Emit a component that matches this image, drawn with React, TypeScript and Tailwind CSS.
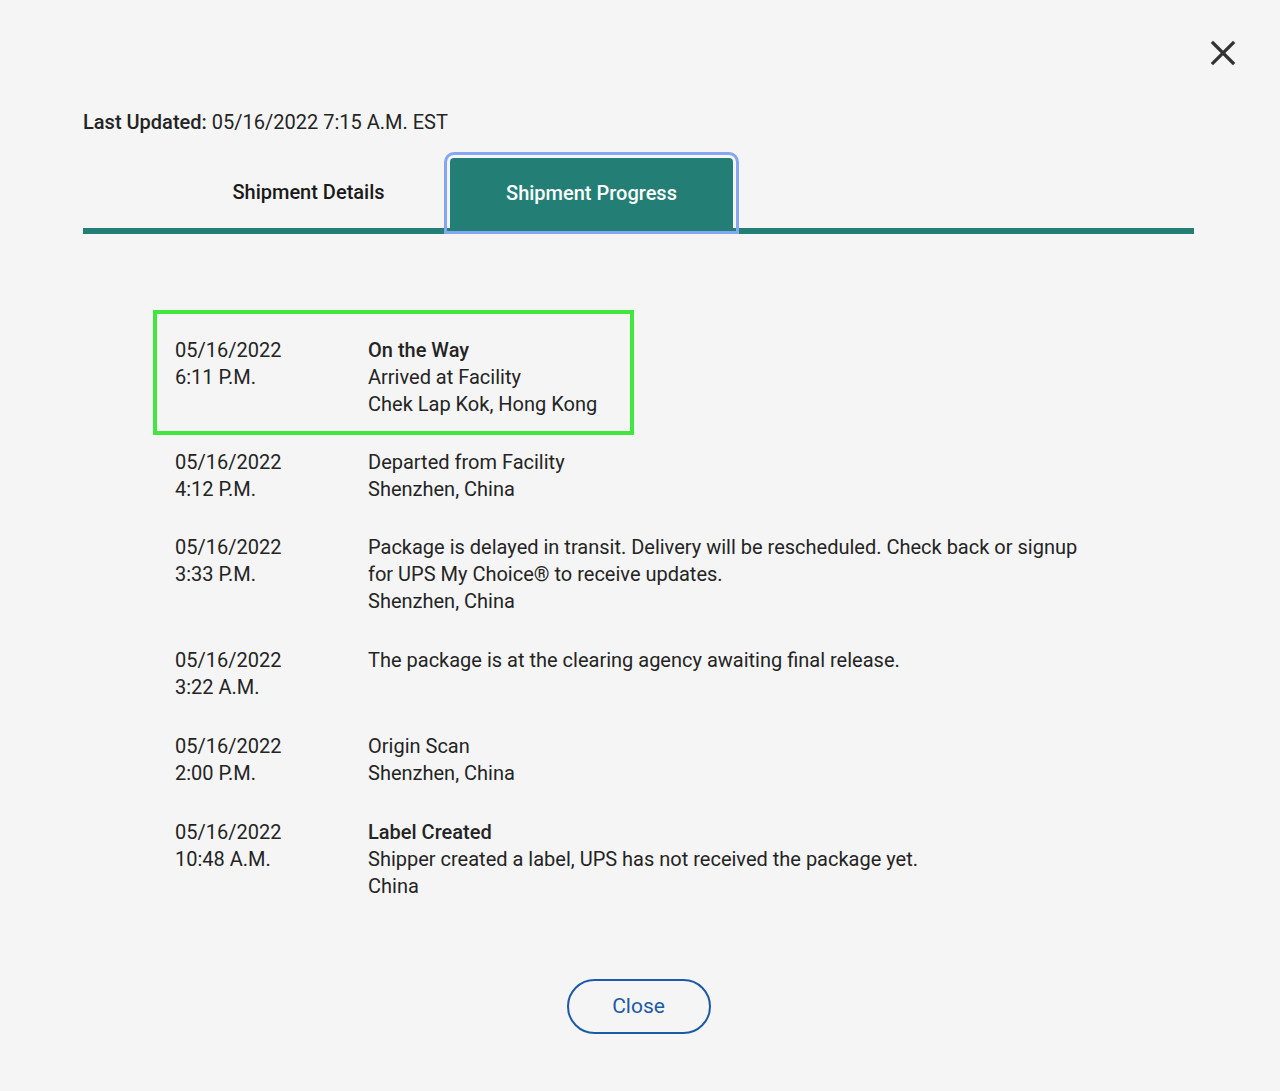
import React from "react";

type Row = { date: string; time: string; title?: string; lines: string[] };

const rows: Row[] = [
  { date: "05/16/2022", time: "4:12 P.M.", lines: ["Departed from Facility", "Shenzhen, China"] },
  {
    date: "05/16/2022",
    time: "3:33 P.M.",
    lines: [
      "Package is delayed in transit. Delivery will be rescheduled. Check back or signup for UPS My Choice® to receive updates.",
      "Shenzhen, China",
    ],
  },
  { date: "05/16/2022", time: "3:22 A.M.", lines: ["The package is at the clearing agency awaiting final release."] },
  { date: "05/16/2022", time: "2:00 P.M.", lines: ["Origin Scan", "Shenzhen, China"] },
  {
    date: "05/16/2022",
    time: "10:48 A.M.",
    title: "Label Created",
    lines: ["Shipper created a label, UPS has not received the package yet.", "China"],
  },
];

function RowContent({ r }: { r: Row }) {
  return (
    <div className="flex">
      <div className="w-[193px] shrink-0">
        <div>{r.date}</div>
        <div>{r.time}</div>
      </div>
      <div className="max-w-[720px]">
        {r.title && <div className="font-medium">{r.title}</div>}
        {r.lines.map((l, i) => (
          <div key={i}>{l}</div>
        ))}
      </div>
    </div>
  );
}

export default function App() {
  return (
    <div className="min-h-[1091px] bg-[#f5f5f5] font-['Roboto','Liberation_Sans',sans-serif] text-[20px] leading-[27px] text-[#242424]">
      <div className="flex justify-end pt-[40px] pr-[44px]">
        <button aria-label="Close" className="w-[26px] h-[26px] flex items-center justify-center">
          <svg width="26" height="26" viewBox="0 0 26 26">
            <path d="M3 3 L23 23 M23 3 L3 23" stroke="#333" strokeWidth="3.2" strokeLinecap="square" />
          </svg>
        </button>
      </div>

      <div className="px-[83px] w-[1277px]">
        <div className="mt-[42.5px]">
          <span className="font-medium">Last Updated:</span> 05/16/2022 7:15 A.M. EST
        </div>

        <div className="mt-[22.5px] flex pl-[84px] border-b-[6px] border-[#237f75]">
          <button className="w-[283px] h-[70px] pb-[2px] flex items-center justify-center font-medium text-[#1a1a1a]">
            Shipment Details
          </button>
          <button className="w-[283px] h-[70px] flex items-center justify-center font-medium text-white bg-[#237f75] rounded-t-[4px] outline-[3px] outline-solid outline-[#85a6f2] outline-offset-[3px]">
            Shipment Progress
          </button>
        </div>

        <div className="mt-[76px]">
          <div className="ml-[70px] w-[481px] border-4 border-[#41e63f] pt-[22.5px] pb-[13.5px] pl-[18px]">
            <RowContent
              r={{
                date: "05/16/2022",
                time: "6:11 P.M.",
                title: "On the Way",
                lines: ["Arrived at Facility", "Chek Lap Kok, Hong Kong"],
              }}
            />
          </div>
          {rows.map((r, i) => (
            <div key={i} className={(i === 0 ? "mt-[13.5px]" : "mt-[31.8px]") + " pl-[92px]"}>
              <RowContent r={r} />
            </div>
          ))}
        </div>

        <div className="mt-[79px] flex justify-center">
          <button className="w-[144px] h-[55px] rounded-full border-2 border-[#1c5aa8] text-[#1c5aa8] text-[21px] flex items-center justify-center">
            Close
          </button>
        </div>
      </div>
    </div>
  );
}
